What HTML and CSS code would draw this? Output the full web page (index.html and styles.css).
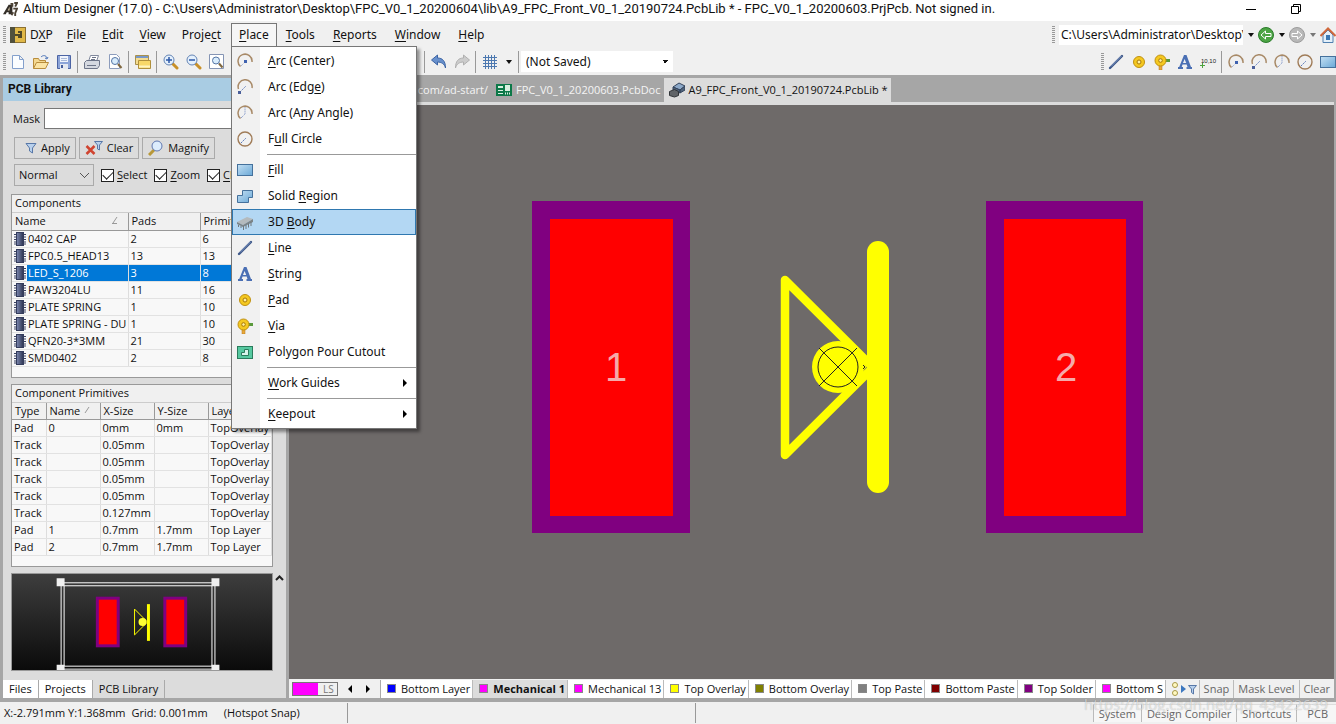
FILE: index.html
```html
<!DOCTYPE html>
<html lang="en">

<head>
    <meta charset="UTF-8">
    <meta name="viewport" content="width=device-width, initial-scale=1.0">
    <title>Altium Designer (17.0)</title>
    <link rel="stylesheet" href="styles.css">
</head>

<body>
    <!-- shared icons -->
    <svg class="icon-defs" aria-hidden="true">
        <defs>
            <linearGradient id="blue-fill" x1="0" y1="0" x2="1" y2="1">
                <stop offset="0" stop-color="#c4e0f4" />
                <stop offset="1" stop-color="#6aa8d6" />
            </linearGradient>
            <linearGradient id="preview-bg" x1="0" y1="0" x2="0" y2="1">
                <stop offset="0" stop-color="#3e3e3e" />
                <stop offset="1" stop-color="#0a0a0a" />
            </linearGradient>
            <linearGradient id="chip-fill" x1="0" y1="0" x2="1" y2="0">
                <stop offset="0" stop-color="#7c88b0" />
                <stop offset="1" stop-color="#2c3350" />
            </linearGradient>
        </defs>
        <symbol id="i-arc-center" viewBox="0 0 16 16">
            <path d="M3.5 13.5A7 7 0 1 1 15 9" fill="none" stroke="#a88a68" stroke-width="1.5" />
            <path d="M4 13l4-4" stroke="#8a9cc8" stroke-dasharray="1 1" />
            <rect x="7" y="7" width="3" height="3" fill="#3f62b0" />
        </symbol>
        <symbol id="i-arc-edge" viewBox="0 0 16 16">
            <path d="M1.500 10A7 7 0 1 1 15 9" fill="none" stroke="#a88a68" stroke-width="1.500" />
            <path d="M3 13l6-6" stroke="#6a84c0" stroke-dasharray="2 1" />
            <rect x="1" y="12" width="3" height="3" fill="#4a5f9a" />
        </symbol>
        <symbol id="i-arc-any" viewBox="0 0 16 16">
            <path d="M3.500 13.500A7 7 0 1 1 15 9" fill="none" stroke="#a88a68" stroke-width="1.500" />
            <path d="M4 13l4-4V2" fill="none" stroke="#6a84c0" stroke-dasharray="1 1" />
        </symbol>
        <symbol id="i-circle" viewBox="0 0 16 16">
            <circle cx="8" cy="8" r="7" fill="none" stroke="#a07c58" stroke-width="1.400" />
            <path d="M4 12l5-5" stroke="#5a78b8" stroke-dasharray="2 1" />
        </symbol>
        <symbol id="i-fill" viewBox="0 0 16 16">
            <rect x="0.500" y="2.500" width="15" height="11" fill="url(#blue-fill)" stroke="#45719c" />
        </symbol>
        <symbol id="i-region" viewBox="0 0 16 16">
            <path d="M5.500 2.500h10v7h-4v5h-11v-7h5z" fill="url(#blue-fill)" stroke="#45719c" />
        </symbol>
        <symbol id="i-body" viewBox="0 0 16 16">
            <path d="M0 8l10-5 6 2-10 6z" fill="#b4babd" />
            <path d="M0 8l6 3 10-6v3L6 13l-6-3z" fill="#7c8488" />
            <path d="M1.500 11v2M4 12v2M6.500 12v4M9 11v4M11.500 9.500v4M14 8v4" stroke="#70787c" />
        </symbol>
        <symbol id="i-line" viewBox="0 0 16 16">
            <path d="M2 14L14 2" stroke="#3c5688" stroke-width="2.400" stroke-linecap="round" />
            <path d="M3 12.500L13.500 2" stroke="#92a8d4" stroke-width="0.800" />
        </symbol>
        <symbol id="i-string" viewBox="0 0 16 16">
            <path d="M7 1h2.500l4.500 12h1v2H9.500v-2h1l-.8-2.500H5.500L4.700 13H6v2H1v-2h1.200zM7.600 5L6 9h3.200z" fill="#4a6fb4" fill-rule="evenodd" />
        </symbol>
        <symbol id="i-pad" viewBox="0 0 16 16">
            <circle cx="8" cy="8" r="5.500" fill="#f4c820" stroke="#c09010" />
            <circle cx="8" cy="8" r="2" fill="#fff0a0" stroke="#a87808" />
        </symbol>
        <symbol id="i-via" viewBox="0 0 16 16">
            <rect x="11" y="5" width="5" height="3" fill="#5a9a3c" />
            <rect x="5" y="10" width="3" height="6" fill="#e8a83c" stroke="#b87818" stroke-width="0.500" />
            <circle cx="6.500" cy="6.500" r="5.500" fill="#f4c820" stroke="#c09010" />
            <circle cx="6.500" cy="6.500" r="1.800" fill="#fff0a0" stroke="#a87808" />
        </symbol>
        <symbol id="i-cutout" viewBox="0 0 16 16">
            <rect x="0.500" y="2.500" width="15" height="12" fill="#56c8a0" stroke="#2a7c5c" />
            <path d="M7.500 5.500h4v6h-7v-3h3z" fill="#d8f4ea" stroke="#2a7c5c" />
        </symbol>
        <symbol id="i-chip" viewBox="0 0 12 14">
            <path d="M0 2.500h12M0 5h12M0 7.500h12M0 10h12M0 12h12" stroke="#3c4464" />
            <rect x="2.500" y="0.500" width="7" height="13" fill="url(#chip-fill)" stroke="#343c5c" />
        </symbol>
        <symbol id="i-funnel" viewBox="0 0 12 12">
            <path d="M1 1.500h10L7.500 6v5l-3-2V6z" fill="#b8d0ec" stroke="#5878a8" />
        </symbol>
        <symbol id="i-down" viewBox="0 0 6 4">
            <path d="M0 0h6L3 4z" fill="currentColor" />
        </symbol>
        <symbol id="i-lens" viewBox="0 0 16 16">
            <path d="M9.500 9.500L14 14" stroke="#c89028" stroke-width="3" stroke-linecap="round" />
            <circle cx="6" cy="6" r="5" fill="#e4f0fc" stroke="#6484b4" />
        </symbol>
    </svg>

    <header class="title-bar">
        <svg class="logo" viewBox="0 0 16 16">
            <path d="M0 13L6 3h4v10H6v-2H4l-1 2z" fill="#332e28" />
            <path d="M5 9h2V5z" fill="#d8c8a8" />
            <path d="M8 2h2v3M12 1h3l-2 4M11 7h4l-2 5v3M9 14l2-3" fill="none" stroke="#4c4234" stroke-width="2" />
        </svg>
        <span class="title-text">Altium Designer (17.0) - C:\Users\Administrator\Desktop\FPC_V0_1_20200604\lib\A9_FPC_Front_V0_1_20190724.PcbLib * - FPC_V0_1_20200603.PrjPcb. Not signed in.</span>
        <button class="window-button" aria-label="Minimize"><svg viewBox="0 0 10 10"><path d="M0 5.500h10" stroke="#000" /></svg></button>
        <button class="window-button" aria-label="Restore"><svg viewBox="0 0 10 10"><path d="M2.500 2.500v-2h7v7h-2M0.500 2.500h7v7h-7z" fill="none" stroke="#000" /></svg></button>
    </header>

    <nav class="menu-bar">
        <span class="grip"></span>
        <button class="menu-item dxp">
            <svg class="icon" viewBox="0 0 16 16">
                <rect x="0.500" y="0.500" width="15" height="15" fill="#e0b848" stroke="#8c7030" />
                <rect x="0" y="0" width="5" height="16" fill="#50503c" />
                <path d="M5 8h5M8 5h3v5H8" fill="none" stroke="#504828" stroke-width="2" />
            </svg>
            <span>D<u>X</u>P</span>
        </button>
        <button class="menu-item"><u>F</u>ile</button>
        <button class="menu-item"><u>E</u>dit</button>
        <button class="menu-item"><u>V</u>iew</button>
        <button class="menu-item">Proje<u>c</u>t</button>
        <div class="menu-open">
            <button class="menu-item active"><u>P</u>lace</button>
            <ul class="menu">
                <li><button><svg class="icon"><use href="#i-arc-center" /></svg><span><u>A</u>rc (Center)</span></button></li>
                <li><button><svg class="icon"><use href="#i-arc-edge" /></svg><span>Arc (Edg<u>e</u>)</span></button></li>
                <li><button><svg class="icon"><use href="#i-arc-any" /></svg><span>Arc (A<u>n</u>y Angle)</span></button></li>
                <li><button><svg class="icon"><use href="#i-circle" /></svg><span>F<u>u</u>ll Circle</span></button></li>
                <li class="divider"></li>
                <li><button><svg class="icon"><use href="#i-fill" /></svg><span><u>F</u>ill</span></button></li>
                <li><button><svg class="icon"><use href="#i-region" /></svg><span>Solid <u>R</u>egion</span></button></li>
                <li><button class="hover"><svg class="icon"><use href="#i-body" /></svg><span>3D <u>B</u>ody</span></button></li>
                <li><button><svg class="icon"><use href="#i-line" /></svg><span><u>L</u>ine</span></button></li>
                <li><button><svg class="icon"><use href="#i-string" /></svg><span><u>S</u>tring</span></button></li>
                <li><button><svg class="icon"><use href="#i-pad" /></svg><span><u>P</u>ad</span></button></li>
                <li><button><svg class="icon"><use href="#i-via" /></svg><span><u>V</u>ia</span></button></li>
                <li><button><svg class="icon"><use href="#i-cutout" /></svg><span>Polygon Pour Cutout</span></button></li>
                <li class="divider"></li>
                <li><button><i class="icon"></i><span><u>W</u>ork Guides</span><svg class="submenu" viewBox="0 0 4 8"><path d="M0 0l4 4-4 4z" /></svg></button></li>
                <li class="divider"></li>
                <li><button><i class="icon"></i><span><u>K</u>eepout</span><svg class="submenu" viewBox="0 0 4 8"><path d="M0 0l4 4-4 4z" /></svg></button></li>
            </ul>
        </div>
        <button class="menu-item"><u>T</u>ools</button>
        <button class="menu-item"><u>R</u>eports</button>
        <button class="menu-item"><u>W</u>indow</button>
        <button class="menu-item"><u>H</u>elp</button>

        <div class="address">
            <span class="grip"></span>
            <input class="address-input" type="text" aria-label="Path" value="C:\Users\Administrator\Desktop\FPC_V0_1_20200604">
            <button class="drop" aria-label="Path list"><svg><use href="#i-down" /></svg></button>
            <button class="nav-button" aria-label="Back">
                <svg class="icon" viewBox="0 0 16 16">
                    <circle cx="8" cy="8" r="7.500" fill="#4ca444" stroke="#2c7c2c" />
                    <path d="M3 8l4.500-4v2.500H13v3H7.500V12z" fill="#4ca444" stroke="#fff" />
                </svg>
            </button>
            <button class="drop" aria-label="Back list"><svg><use href="#i-down" /></svg></button>
            <button class="nav-button" aria-label="Forward">
                <svg class="icon" viewBox="0 0 16 16">
                    <circle cx="8" cy="8" r="7.500" fill="#b8b8b8" stroke="#9c9c9c" />
                    <path d="M13 8L8.500 4v2.500H3v3h5.500V12z" fill="#b8b8b8" stroke="#fff" />
                </svg>
            </button>
            <button class="drop dim" aria-label="Forward list"><svg><use href="#i-down" /></svg></button>
            <button class="nav-button" aria-label="Home">
                <svg class="icon" viewBox="0 0 16 16">
                    <path d="M3 8v7.500h10V8L8 3z" fill="#e4f0fa" stroke="#5080b0" />
                    <rect x="6" y="8" width="4" height="5" fill="#3c78b4" />
                    <path d="M0.500 9L8 1.500 15.500 9" fill="none" stroke="#d0683c" stroke-width="2" />
                </svg>
            </button>
        </div>
    </nav>

    <div class="tool-bar">
        <span class="grip"></span>
        <button class="tool" aria-label="New"><svg class="icon" viewBox="0 0 16 16"><path d="M2.500 1.500h7l4 4v9h-11zM9.500 1.500v4h4" fill="#fbfdff" stroke="#84a0cc" /></svg></button>
        <button class="tool" aria-label="Open"><svg class="icon" viewBox="0 0 16 16"><path d="M0.500 14.500v-10h5l1 2h6v2" fill="#f4d890" stroke="#b88c3c" /><path d="M0.500 14.500l3-6h12l-3 6z" fill="#fbe4a4" stroke="#b88c3c" /><path d="M8 3c2-2 5-2 6 1m0 1l-2-1m2 1l1-2" fill="none" stroke="#4c74b8" /></svg></button>
        <button class="tool" aria-label="Save"><svg class="icon" viewBox="0 0 16 16"><path d="M1.500 1.500h13v13h-13z" fill="#8ca4d8" stroke="#4c64a4" /><rect x="4" y="2" width="8" height="6" fill="#f0f4fc" /><path d="M5 4.500h6M5 6.500h6" stroke="#a8b8d8" /><rect x="4" y="10" width="8" height="5" fill="#e4e8f0" /><rect x="5" y="11" width="2" height="3" fill="#445c9c" /></svg></button>
        <span class="separator"></span>
        <button class="tool" aria-label="Print"><svg class="icon" viewBox="0 0 16 16"><path d="M4.500 7.500l2-6h8l-2 6" fill="#fff" stroke="#80889c" /><path d="M0.500 8.500l2-2h13v5l-2 3h-13z" fill="#d4d8e0" stroke="#6c7488" /><path d="M3 11.500h9M8 3.500h4M7 5.500h4" stroke="#6c7488" /></svg></button>
        <button class="tool" aria-label="Print Preview"><svg class="icon" viewBox="0 0 16 16"><path d="M2.500 0.500h7l3 3v11h-10z" fill="#fff" stroke="#8c9cbc" /><circle cx="8" cy="7" r="3.500" fill="#d8ecfc" stroke="#5474a4" /><path d="M11 10l3.500 4" stroke="#806840" stroke-width="2" /></svg></button>
        <span class="separator"></span>
        <button class="tool" aria-label="Browse"><svg class="icon" viewBox="0 0 16 16"><path d="M0.500 1.500h13v9h-13z" fill="#f4dc90" stroke="#a8904c" /><path d="M1 3h12" stroke="#7898c8" stroke-width="2" /><path d="M3.500 6.500h12v8h-12z" fill="#f8d868" stroke="#b0903c" /><path d="M4 12.500h11" stroke="#fff4c0" stroke-width="2" /></svg></button>
        <span class="separator"></span>
        <button class="tool" aria-label="Zoom In"><svg class="icon"><use href="#i-lens" /></svg><svg class="icon sign" viewBox="0 0 16 16"><path d="M3 6h6M6 3v6" stroke="#2c58a8" stroke-width="1.500" /></svg></button>
        <button class="tool" aria-label="Zoom Out"><svg class="icon"><use href="#i-lens" /></svg><svg class="icon sign" viewBox="0 0 16 16"><path d="M3 6h6" stroke="#2c58a8" stroke-width="1.500" /></svg></button>
        <button class="tool" aria-label="Fit Document"><svg class="icon" viewBox="0 0 16 16"><path d="M0.500 0.500h14v14h-14z" fill="#fff" stroke="#8494b4" /><circle cx="7" cy="6.500" r="3.500" fill="#d8ecfc" stroke="#5474a4" /><path d="M10 9.500l3.500 4" stroke="#806840" stroke-width="2" /></svg></button>
        <div class="tool-group">
            <span class="separator"></span>
            <button class="tool" aria-label="Undo"><svg class="icon" viewBox="0 0 16 16"><path d="M0.500 6l6-5v3c5 0 8 3 8 10-1-4-4-6-8-6v3z" fill="#6890cc" stroke="#3c64a4" /></svg></button>
            <button class="tool" aria-label="Redo"><svg class="icon" viewBox="0 0 16 16"><path d="M15.500 6l-6-5v3c-5 0-8 3-8 10 1-4 4-6 8-6v3z" fill="#ccc" stroke="#b0b0b0" /></svg></button>
            <span class="separator"></span>
            <button class="tool" aria-label="Grids"><svg class="icon" viewBox="0 0 16 16"><path d="M3.500 1v14M6.500 1v14M9.500 1v14M12.500 1v14M1 3.500h14M1 6.500h14M1 9.500h14M1 12.500h14" stroke="#4c78b0" /></svg></button>
            <button class="drop" aria-label="Grid list"><svg><use href="#i-down" /></svg></button>
            <span class="separator"></span>
            <select class="variant" aria-label="Variant">
                <option>(Not Saved)</option>
            </select>
        </div>
        <div class="tool-group place-tools">
            <span class="grip"></span>
            <button class="tool" aria-label="Line"><svg class="icon"><use href="#i-line" /></svg></button>
            <button class="tool" aria-label="Pad"><svg class="icon"><use href="#i-pad" /></svg></button>
            <button class="tool" aria-label="Via"><svg class="icon"><use href="#i-via" /></svg></button>
            <button class="tool" aria-label="String"><svg class="icon"><use href="#i-string" /></svg></button>
            <button class="tool coordinate" aria-label="Coordinate"><svg viewBox="0 0 18 16"><path d="M1 11.500h5M3.500 9v5" stroke="#4ca43c" /><text x="2" y="9">10,10</text></svg></button>
            <span class="separator"></span>
            <button class="tool" aria-label="Arc center"><svg class="icon"><use href="#i-arc-center" /></svg></button>
            <button class="tool" aria-label="Arc edge"><svg class="icon"><use href="#i-arc-edge" /></svg></button>
            <button class="tool" aria-label="Arc any angle"><svg class="icon"><use href="#i-arc-any" /></svg></button>
            <button class="tool" aria-label="Full circle"><svg class="icon"><use href="#i-circle" /></svg></button>
            <button class="tool" aria-label="Fill"><svg class="icon"><use href="#i-fill" /></svg></button>
        </div>
    </div>

    <main class="main">
        <aside class="panel">
            <h2 class="panel-title">PCB Library</h2>
            <div class="panel-body">
                <div class="mask-row">
                    <label for="mask">Mask</label>
                    <input id="mask" type="text">
                </div>
                <div class="button-row">
                    <button><svg class="small-icon"><use href="#i-funnel" /></svg>Apply</button>
                    <button><svg class="clear-icon" viewBox="0 0 18 16"><path d="M9.500 1.500h8L14.500 5v5l-2-1V5z" fill="#b8d0ec" stroke="#5878a8" /><path d="M1.500 6l8 8M9.500 6l-8 8" stroke="#d04430" stroke-width="2.500" /></svg>Clear</button>
                    <button><svg class="icon" viewBox="0 0 16 16"><path d="M6 10l-5 5" stroke="#b89838" stroke-width="3" /><circle cx="9" cy="6" r="5" fill="#dcecfc" stroke="#6078b0" /></svg>Magnify</button>
                </div>
                <div class="option-row">
                    <select class="mode" aria-label="Mode">
                        <option>Normal</option>
                    </select>
                    <label><input type="checkbox" checked><span><u>S</u>elect</span></label>
                    <label><input type="checkbox" checked><span><u>Z</u>oom</span></label>
                    <label><input type="checkbox" checked><span><u>C</u>lear</span></label>
                </div>

                <section class="list">
                    <h3>Components</h3>
                    <table class="components">
                        <thead>
                            <tr><th>Name<svg class="sort" viewBox="0 0 6 8"><path d="M0 7.500h5M1 7l4-6" /></svg></th><th>Pads</th><th>Primitives</th></tr>
                        </thead>
                        <tbody>
                            <tr><td><svg class="chip"><use href="#i-chip" /></svg><span>0402 CAP</span></td><td>2</td><td>6</td></tr>
                            <tr><td><svg class="chip"><use href="#i-chip" /></svg><span>FPC0.5_HEAD13</span></td><td>13</td><td>13</td></tr>
                            <tr class="selected"><td><svg class="chip"><use href="#i-chip" /></svg><span>LED_S_1206</span></td><td>3</td><td>8</td></tr>
                            <tr><td><svg class="chip"><use href="#i-chip" /></svg><span>PAW3204LU</span></td><td>11</td><td>16</td></tr>
                            <tr><td><svg class="chip"><use href="#i-chip" /></svg><span>PLATE SPRING</span></td><td>1</td><td>10</td></tr>
                            <tr><td><svg class="chip"><use href="#i-chip" /></svg><span>PLATE SPRING - DU</span></td><td>1</td><td>10</td></tr>
                            <tr><td><svg class="chip"><use href="#i-chip" /></svg><span>QFN20-3*3MM</span></td><td>21</td><td>30</td></tr>
                            <tr><td><svg class="chip"><use href="#i-chip" /></svg><span>SMD0402</span></td><td>2</td><td>8</td></tr>
                        </tbody>
                    </table>
                </section>

                <section class="list">
                    <h3>Component Primitives</h3>
                    <table class="primitives">
                        <thead>
                            <tr><th>Type</th><th>Name<svg class="sort" viewBox="0 0 6 8"><path d="M1 7l4-6" /></svg></th><th>X-Size</th><th>Y-Size</th><th>Layer</th></tr>
                        </thead>
                        <tbody>
                            <tr><td>Pad</td><td>0</td><td>0mm</td><td>0mm</td><td>TopOverlay</td></tr>
                            <tr><td>Track</td><td></td><td>0.05mm</td><td></td><td>TopOverlay</td></tr>
                            <tr><td>Track</td><td></td><td>0.05mm</td><td></td><td>TopOverlay</td></tr>
                            <tr><td>Track</td><td></td><td>0.05mm</td><td></td><td>TopOverlay</td></tr>
                            <tr><td>Track</td><td></td><td>0.05mm</td><td></td><td>TopOverlay</td></tr>
                            <tr><td>Track</td><td></td><td>0.127mm</td><td></td><td>TopOverlay</td></tr>
                            <tr><td>Pad</td><td>1</td><td>0.7mm</td><td>1.7mm</td><td>Top Layer</td></tr>
                            <tr><td>Pad</td><td>2</td><td>0.7mm</td><td>1.7mm</td><td>Top Layer</td></tr>
                        </tbody>
                    </table>
                </section>

                <div class="preview-row">
                    <svg class="preview" viewBox="0 0 262 98" preserveAspectRatio="xMidYMid slice">
                        <rect width="262" height="98" fill="url(#preview-bg)" />
                        <rect x="86" y="25" width="21" height="48" fill="#f00" stroke="#800080" stroke-width="3" />
                        <rect x="154" y="25" width="21" height="48" fill="#f00" stroke="#800080" stroke-width="3" />
                        <path d="M123.500 36v26l13-13z" fill="none" stroke="#ff0" />
                        <circle cx="131.500" cy="49" r="4" fill="#ff3" />
                        <path d="M137.500 31v37" stroke="#ff0" stroke-width="3" />
                        <path d="M49.500 9.500h155v87h-155zM52.500 12.500h149v81h-149z" fill="none" stroke="#fff" />
                        <path d="M45 5h8v8h-8zM201 5h8v8h-8zM45 92h8v6h-8zM201 92h8v6h-8z" fill="#f0f0f0" />
                    </svg>
                    <button class="collapse" aria-label="Collapse"><svg viewBox="0 0 9 6"><path d="M1 5l3.500-3.500L8 5" fill="none" stroke="#222" stroke-width="2" /></svg></button>
                </div>
            </div>
            <nav class="panel-tabs">
                <button>Files</button>
                <button>Projects</button>
                <button class="current">PCB Library</button>
            </nav>
        </aside>

        <section class="workspace">
            <nav class="doc-tabs">
                <button class="home-tab">com/ad-start/</button>
                <button>
                    <svg class="icon" viewBox="0 0 16 16"><rect y="2" width="16" height="12" fill="#0c7848" /><path d="M2 4h5v2H2zM2 8h5v1H2zM2 11h5v1H2zM9 3h5v6H9z" fill="#d8f0e0" /><path d="M9 11.500h6" stroke="#d8f0e0" stroke-dasharray="1 1" stroke-width="2" /></svg>
                    FPC_V0_1_20200603.PcbDoc
                </button>
                <button class="current">
                    <svg class="icon" viewBox="0 0 16 16"><path d="M4 5l6-4 6 3-5 4z" fill="#8ca8c8" stroke="#34445c" /><path d="M4 5v3l7 3V8zM16 4v4l-5 3V8z" fill="#50647c" stroke="#34445c" /><path d="M0.500 9.500l5-2 4 2v4l-4 1.500-5-1.500z" fill="#606468" stroke="#303438" /></svg>
                    A9_FPC_Front_V0_1_20190724.PcbLib *
                </button>
            </nav>

            <!-- footprint -->
            <svg class="canvas" viewBox="0 0 1045 574">
                <g fill="#800080">
                    <rect x="243" y="96" width="158" height="332" />
                    <rect x="697" y="96" width="157" height="332" />
                </g>
                <g fill="#f00">
                    <rect x="261" y="114" width="123" height="297" />
                    <rect x="715" y="114" width="122" height="297" />
                </g>
                <g class="pad-name">
                    <text x="327" y="276">1</text>
                    <text x="777" y="276">2</text>
                </g>
                <rect x="578" y="136" width="22" height="252" rx="11" fill="#ff0" />
                <path d="M496 175v175l88-87.500z" fill="none" stroke="#ff0" stroke-width="8.500" stroke-linejoin="round" />
                <circle cx="549" cy="262" r="26" fill="#ff0" />
                <path d="M560 249l12 13-12 13" fill="none" stroke="#ff0" stroke-width="8" />
                <circle cx="549" cy="262" r="20" fill="none" stroke="#222" />
                <path d="M530 243l38 38M568 243l-38 38M574 260l2 2-2 2" fill="none" stroke="#222" />
            </svg>

            <footer class="layer-bar">
                <button class="layer-set"><span class="layer-color"></span>LS</button>
                <button class="scroll" aria-label="Previous layers"><svg viewBox="0 0 4 8"><path d="M4 0L0 4l4 4z" /></svg></button>
                <button class="scroll" aria-label="Next layers"><svg viewBox="0 0 4 8"><path d="M0 0l4 4-4 4z" /></svg></button>
                <div class="layers">
                    <button><i class="swatch bottom-layer"></i>Bottom Layer</button>
                    <button class="current"><i class="swatch mechanical"></i>Mechanical 1</button>
                    <button><i class="swatch mechanical"></i>Mechanical 13</button>
                    <button><i class="swatch top-overlay"></i>Top Overlay</button>
                    <button><i class="swatch bottom-overlay"></i>Bottom Overlay</button>
                    <button><i class="swatch top-paste"></i>Top Paste</button>
                    <button><i class="swatch bottom-paste"></i>Bottom Paste</button>
                    <button><i class="swatch top-solder"></i>Top Solder</button>
                    <button><i class="swatch mechanical"></i>Bottom S</button>
                </div>
                <button class="filter" aria-label="Filter">
                    <svg viewBox="0 0 28 16"><circle cx="4" cy="4" r="2.500" fill="#fff8c0" stroke="#a89848" /><circle cx="4" cy="12" r="2.500" fill="#fff8c0" stroke="#a89848" /><path d="M10 4l5 4-5 4z" fill="#3c78c0" /><path d="M17.500 4.500h8l-3 3.500v5l-2-1.500V8z" fill="#b8d0ec" stroke="#5878a8" /></svg>
                </button>
                <div class="mask-buttons">
                    <button>Snap</button>
                    <button>Mask Level</button>
                    <button>Clear</button>
                </div>
            </footer>
        </section>
    </main>

    <footer class="status-bar">
        <span class="status-position"><span>X:-2.791mm Y:1.368mm</span><span>Grid: 0.001mm</span><span class="snap">(Hotspot Snap)</span></span>
        <span class="status-cell"></span>
        <nav class="status-buttons">
            <button>System</button>
            <button>Design Compiler</button>
            <button>Shortcuts</button>
            <button class="last">PCB</button>
        </nav>
        <span class="watermark">https://blog.csdn.net/qq_43422639</span>
    </footer>
</body>

</html>
```

FILE: styles.css
```css
* {
    box-sizing: border-box;
}

body {
    margin: 0;
    height: 100vh;
    display: flex;
    flex-direction: column;
    overflow: hidden;
    font-family: "Open Sans", "Noto Sans", sans-serif;
    font-size: 11px;
    line-height: 16px;
    color: #111;
    background-color: #f0f0f0;
}

button,
input,
select {
    font: inherit;
    color: inherit;
    margin: 0;
    padding: 0;
    border: none;
    border-radius: 0;
    background: none;
}

button {
    white-space: nowrap;
}

u {
    text-underline-offset: 2px;
}

svg {
    display: block;
    flex: none;
}

.icon-defs {
    position: absolute;
    width: 0;
    height: 0;
}

.icon {
    width: 16px;
    height: 16px;
    flex: none;
}

.grip {
    width: 3px;
    height: 17px;
    flex: none;
    background: repeating-linear-gradient(#999 0 1px, #f0f0f0 1px 2px);
}

/* title bar */
.title-bar {
    display: flex;
    align-items: center;
    height: 21px;
    flex: none;
    padding: 0 18px 3px 3px;
    background-color: #fff;
    font-family: Roboto, sans-serif;
    font-size: 13px;
}

.logo {
    width: 15px;
    height: 15px;
    margin-right: 5px;
}

.title-text {
    flex: 1;
    white-space: nowrap;
    overflow: hidden;
}

.window-button {
    width: 45px;
    display: flex;
    justify-content: center;
}

.window-button svg {
    width: 10px;
    height: 10px;
}

/* menu bar */
.menu-bar {
    display: flex;
    align-items: center;
    height: 27px;
    flex: none;
    padding-left: 3px;
    font-family: "Noto Sans", sans-serif;
    font-size: 12px;
}

.menu-item {
    height: 24px;
    padding: 0 7px;
    border: 1px solid transparent;
    border-bottom: none;
}

.dxp {
    display: flex;
    align-items: center;
    gap: 4px;
    padding: 0 5px 0 3px;
}

.menu-open {
    position: relative;
    margin-left: 2px;
}

.menu-open ~ .menu-item {
    padding: 0 8px;
}

.menu-item.active {
    display: block;
    border-color: #777;
    background-color: #f6f6f6;
}

.menu {
    position: absolute;
    top: 23px;
    left: 0;
    z-index: 10;
    width: 186px;
    margin: 0;
    padding: 1px 0;
    list-style: none;
    border: 1px solid #777;
    background: linear-gradient(90deg, #f1f1f1 28px, #fff 28px);
    box-shadow: 3px 3px 3px rgba(0, 0, 0, 0.4);
}

.menu button {
    display: flex;
    align-items: center;
    gap: 15px;
    width: 100%;
    height: 26px;
    padding: 0 8px 0 4px;
    text-align: left;
    border: 1px solid transparent;
}

.menu button span {
    flex: 1;
}

.menu button.hover {
    border-color: #2f78b0;
    background-color: #b3d7f3;
}

.menu .divider {
    height: 1px;
    margin: 2px 0 2px 35px;
    background-color: #999;
}

.submenu {
    width: 4px;
    height: 8px;
}

.address {
    display: flex;
    align-items: center;
    margin-left: auto;
}

.address-input {
    width: 184px;
    height: 20px;
    margin-left: 4px;
    padding-left: 2px;
    background-color: #fff;
    text-overflow: clip;
}

.drop {
    width: 15px;
    height: 20px;
    display: flex;
    align-items: center;
    justify-content: center;
}

.drop svg {
    width: 6px;
    height: 4px;
}

.dim {
    color: #777;
}

/* tool bar */
.tool-bar {
    display: flex;
    align-items: center;
    height: 27px;
    flex: none;
    padding-left: 3px;
}

.tool {
    position: relative;
    width: 23px;
    height: 22px;
    display: flex;
    align-items: center;
    justify-content: center;
    flex: none;
}

.sign {
    position: absolute;
}

.separator {
    width: 1px;
    height: 22px;
    margin: 0 2px;
    flex: none;
    background-color: #999;
}

.tool-group {
    display: flex;
    align-items: center;
    margin-left: 194px;
}

.place-tools {
    margin: 0 -3px 0 auto;
}

.variant {
    appearance: none;
    width: 152px;
    height: 21px;
    padding-left: 5px;
    font-family: "Noto Sans", sans-serif;
    font-size: 12px;
    background-color: #fff;
    background-image: linear-gradient(45deg, transparent 50%, #111 50%), linear-gradient(-45deg, transparent 50%, #111 50%);
    background-size: 3px 3px;
    background-position: 141px 9px, 144px 9px;
    background-repeat: no-repeat;
}

.coordinate svg {
    width: 18px;
    height: 16px;
}

.coordinate text {
    font-family: "Liberation Sans", sans-serif;
    font-size: 6px;
    fill: #222;
}

/* main area */
.main {
    display: flex;
    flex: 1;
    min-height: 0;
    padding: 0 2px 4px 3px;
    background-color: #a6a6a6;
}

.panel {
    width: 286px;
    flex: none;
    display: flex;
    flex-direction: column;
    padding-top: 3px;
    border-right: 3px solid #a6a6a6;
}

.panel-title {
    margin: 0;
    height: 23px;
    padding-left: 5px;
    font-family: Roboto, sans-serif;
    font-size: 12px;
    line-height: 22px;
    background-color: #a9cce3;
}

.panel-body {
    flex: 1;
    min-height: 0;
    display: flex;
    flex-direction: column;
    padding: 7px 13px 9px 8px;
    background-color: #dcdcdc;
}

.mask-row {
    display: flex;
    align-items: center;
    gap: 4px;
    padding-left: 2px;
}

.mask-row input {
    flex: 1;
    min-width: 0;
    height: 21px;
    border: 1px solid #777;
    background-color: #fff;
}

.button-row {
    display: flex;
    gap: 3px;
    margin: 8px 0 5px 3px;
}

.button-row button {
    display: flex;
    align-items: center;
    gap: 4px;
    height: 22px;
    padding: 0 5px;
    border: 1px solid #aaa;
}

.button-row button:first-child {
    padding-left: 10px;
}

.small-icon {
    width: 12px;
    height: 12px;
}

.clear-icon {
    width: 18px;
    height: 16px;
}

.option-row {
    display: flex;
    align-items: center;
    gap: 7px;
    margin: 0 0 8px 3px;
    overflow: hidden;
}

.mode {
    appearance: none;
    width: 80px;
    height: 22px;
    padding-left: 4px;
    flex: none;
    border: 1px solid #aaa;
    background-image: linear-gradient(45deg, transparent 42%, #555 42% 58%, transparent 58%), linear-gradient(-45deg, transparent 42%, #555 42% 58%, transparent 58%);
    background-size: 5px 5px;
    background-position: 65px 8px, 69px 8px;
    background-repeat: no-repeat;
}

.option-row label {
    display: flex;
    align-items: center;
    gap: 3px;
}

.option-row input {
    appearance: none;
    width: 13px;
    height: 13px;
    border: 1px solid #222;
    background-color: #fff;
}

.option-row input:checked::before {
    content: "";
    display: block;
    width: 9px;
    height: 5px;
    margin: 1px;
    border: solid #222;
    border-width: 0 0 1px 1px;
    transform: rotate(-45deg);
}

.list {
    flex: 1;
    min-height: 0;
    margin-bottom: 6px;
    overflow: hidden;
    border: 1px solid #999;
    background-color: #f8f8f8;
}

.list h3 {
    margin: 0;
    height: 18px;
    padding-left: 3px;
    font-size: 11px;
    font-weight: normal;
    background-color: #f0f0f0;
    border-bottom: 1px solid #ccc;
}

table {
    width: 100%;
    table-layout: fixed;
    border-collapse: collapse;
}

th,
td {
    height: 17px;
    padding: 0 2px;
    line-height: 16px;
    text-align: left;
    font-weight: normal;
    white-space: nowrap;
    overflow: hidden;
    border-right: 1px solid #ddd;
    border-bottom: 1px solid #e2e2e2;
}

th {
    padding-left: 3px;
    background-color: #f0f0f0;
    border-color: #999;
}

.components th:first-child {
    width: 116px;
}

.components th:nth-child(2) {
    width: 72px;
}

.primitives th:first-child {
    width: 34px;
}

.primitives th:nth-child(2),
.primitives th:nth-child(3),
.primitives th:nth-child(4) {
    width: 54px;
}

.sort {
    float: right;
    width: 6px;
    height: 8px;
    margin: 3px 8px 0 0;
    fill: none;
    stroke: #999;
}

.chip {
    float: left;
    width: 12px;
    height: 14px;
    margin-top: 1px;
}

.components td:first-child {
    padding: 0 0 0 2px;
}

.components td span {
    display: block;
    margin-left: 13px;
    padding-left: 1px;
    overflow: hidden;
}

.selected td:not(:first-child),
.selected span {
    color: #fff;
    background-color: #0078d7;
}

.preview-row {
    display: flex;
    margin-right: -13px;
}

.preview {
    flex: 1;
    min-width: 0;
    height: 98px;
    border: 1px solid #999;
}

.collapse {
    width: 13px;
    align-self: flex-start;
    display: flex;
    justify-content: center;
}

.collapse svg {
    width: 9px;
    height: 6px;
    margin-top: 2px;
}

.panel-tabs {
    display: flex;
    height: 18px;
    flex: none;
    background-color: #dcdcdc;
}

.panel-tabs button {
    padding: 0 6px;
    border-right: 1px solid #aaa;
    background-color: #fff;
}

.panel-tabs .current {
    background-color: #dcdcdc;
}

/* workspace */
.workspace {
    flex: 1;
    min-width: 0;
    display: flex;
    flex-direction: column;
}

.doc-tabs {
    display: flex;
    height: 30px;
    flex: none;
    padding-top: 3px;
    border-bottom: 3px solid #dcdcdc;
}

.doc-tabs button {
    display: flex;
    align-items: center;
    gap: 4px;
    padding: 0 3px 0 5px;
    color: #f4f4f4;
}

.doc-tabs .home-tab {
    width: 202px;
    justify-content: flex-end;
}

.doc-tabs .current {
    color: #111;
    background-color: #dcdcdc;
}

.canvas {
    flex: 1;
    width: 100%;
    min-height: 0;
    background-color: #6e6a69;
}

.pad-name text {
    font-family: "Liberation Sans", sans-serif;
    font-size: 40px;
    text-anchor: middle;
    fill: #f5aaaa;
}

.layer-bar {
    display: flex;
    align-items: center;
    height: 19px;
    flex: none;
    padding-left: 3px;
    background-color: #f0f0f0;
}

.layer-set {
    display: flex;
    align-items: center;
    gap: 5px;
    width: 46px;
    height: 14px;
    flex: none;
    font-size: 10px;
    color: #777;
    border: 1px solid #777;
}

.layer-color {
    width: 25px;
    height: 12px;
    background-color: #f0f;
}

.scroll {
    width: 18px;
    margin-left: 3px;
    display: flex;
    justify-content: center;
}

.scroll + .scroll {
    margin: 0;
}

.scroll svg {
    width: 4px;
    height: 8px;
}

.layers {
    display: flex;
    flex: 1;
    min-width: 0;
    margin-left: 3px;
    overflow: hidden;
    border-left: 1px solid #aaa;
}

.layers button {
    display: flex;
    align-items: center;
    gap: 5px;
    height: 18px;
    flex: none;
    padding: 0 2px 0 6px;
    border-right: 1px solid #bbb;
    background-color: #fff;
}

.layers .current {
    font-weight: bold;
    background-color: #dcdcdc;
}

.swatch {
    width: 9px;
    height: 9px;
    border: 1px solid #888;
}

.bottom-layer {
    background-color: #00f;
}

.mechanical {
    background-color: #f0f;
}

.top-overlay {
    background-color: #ff0;
}

.bottom-overlay {
    background-color: #808000;
}

.top-paste {
    background-color: #808080;
}

.bottom-paste {
    background-color: #800000;
}

.top-solder {
    background-color: #800080;
}

.filter svg {
    width: 28px;
    height: 16px;
}

.mask-buttons,
.status-buttons {
    display: flex;
    flex: none;
    color: #666;
}

.mask-buttons button,
.status-buttons button {
    height: 18px;
    padding: 0 4px;
    border-left: 1px solid #bbb;
}

/* status bar */
.status-bar {
    position: relative;
    display: flex;
    align-items: center;
    height: 22px;
    flex: none;
}

.status-position {
    display: flex;
    gap: 6px;
    width: 348px;
    padding-left: 4px;
    line-height: 20px;
    border-right: 1px solid #999;
}

.snap {
    margin-left: 10px;
}

.status-cell {
    width: 348px;
    height: 20px;
    border-right: 1px solid #999;
}

.status-buttons {
    margin-left: auto;
}

.status-buttons button {
    padding: 0 5px;
    border-top: 1px solid #ddd;
    background-color: #f6f6f6;
}

.status-buttons .last {
    padding: 0 8px 0 10px;
}

.watermark {
    position: absolute;
    right: 8px;
    top: -6px;
    font-size: 15px;
    color: rgba(255, 255, 255, 0.6);
    text-shadow: 0 0 1px rgba(0, 0, 0, 0.3);
    pointer-events: none;
}
```
